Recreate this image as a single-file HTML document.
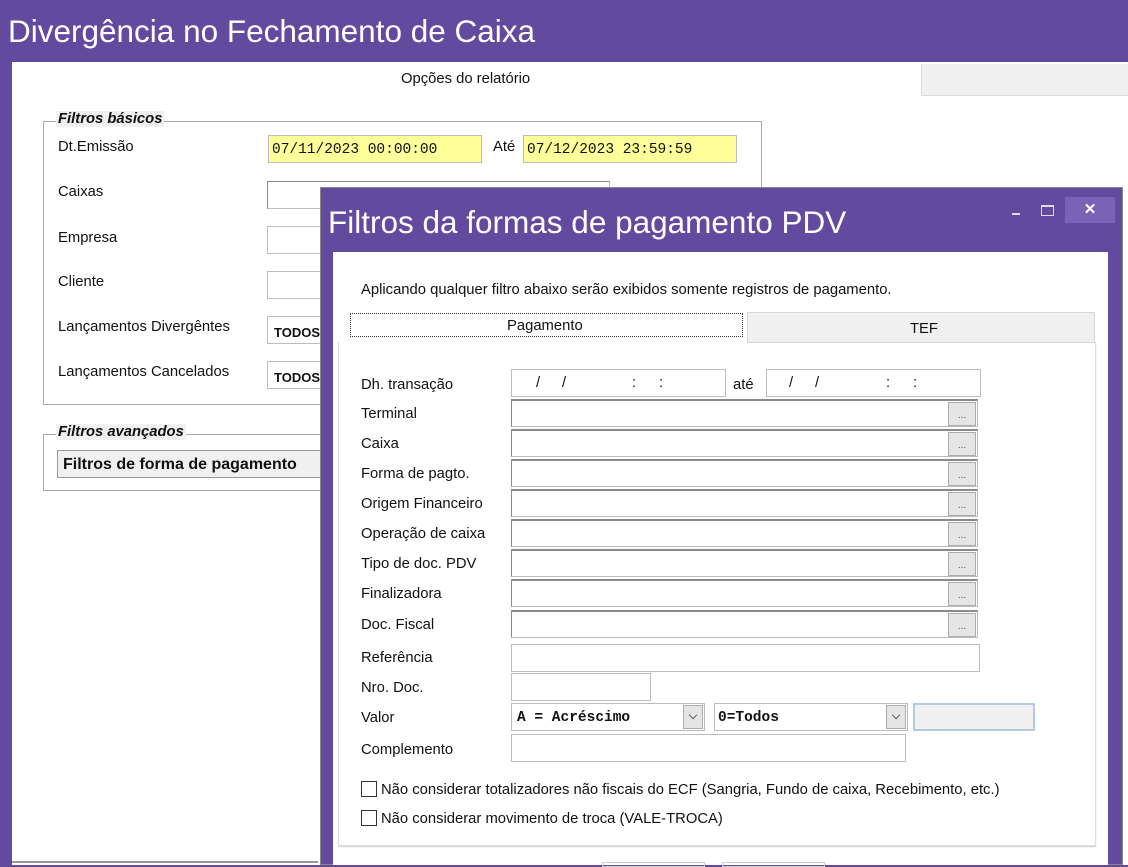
<!DOCTYPE html>
<html><head><meta charset="utf-8"><style>
*{box-sizing:border-box;margin:0;padding:0}
body{width:1128px;height:865px;overflow:hidden;background:#624a9e;font-family:"Liberation Sans",sans-serif;font-size:14.8px;color:#111;position:relative}
.a{position:absolute}
.lbl{position:absolute;font-size:14.8px;white-space:nowrap;margin-top:2px}
.inp{position:absolute;background:#fff;border:1px solid #bdbdbd;height:28px}
.lk{position:absolute;background:#fff;border:1px solid #bbb;border-top:2px solid #8a8a8a;border-left:1px solid #8a8a8a;height:28px}
.btn{position:absolute;right:1px;top:1px;width:28px;height:24px;background:#e5e5e5;border:1px solid #adadad;font-size:10px;color:#555;text-align:center;line-height:26px}
.mono{font-family:"Liberation Mono",monospace;font-size:14.5px}
.cb{position:absolute;width:16px;height:16px;border:1px solid #333;background:#fff}
.s{position:absolute;top:5px}
</style></head><body>
<div class="a" style="left:8px;top:13px;color:#fff;font-size:31.5px;font-weight:300">Divergência no Fechamento de Caixa</div>
<div class="a" style="left:12px;top:62px;width:1116px;height:803px;background:#fff"></div>
<div class="a" style="left:921px;top:64px;width:207px;height:32px;background:#f0f0f0;border-left:1px solid #ddd;border-bottom:1px solid #ddd"></div>
<div class="lbl" style="left:401px;top:69px">Opções do relatório</div>
<div class="a" style="left:12px;top:861px;width:306px;height:2px;background:#999"></div>

<div class="a" style="left:43px;top:121px;width:719px;height:284px;border:1px solid #aaa"></div>
<div class="lbl" style="left:56px;top:109px;background:#f0f0f0;font-weight:bold;font-style:italic;padding:0 2px">Filtros básicos</div>
<div class="lbl" style="left:58px;top:137px">Dt.Emissão</div>
<div class="inp mono" style="left:268px;top:135px;width:214px;background:#ffff99;padding:6px 3px">07/11/2023 00:00:00</div>
<div class="lbl" style="left:493px;top:137px">Até</div>
<div class="inp mono" style="left:523px;top:135px;width:214px;background:#ffff99;padding:6px 3px">07/12/2023 23:59:59</div>
<div class="lbl" style="left:58px;top:182px">Caixas</div>
<div class="inp" style="left:267px;top:181px;width:343px;border-top:1px solid #888;border-left:1px solid #888"></div>
<div class="lbl" style="left:58px;top:228px">Empresa</div>
<div class="inp" style="left:267px;top:226px;width:80px"></div>
<div class="lbl" style="left:58px;top:272px">Cliente</div>
<div class="inp" style="left:267px;top:271px;width:80px"></div>
<div class="lbl" style="left:58px;top:317px">Lançamentos Divergêntes</div>
<div class="inp" style="left:267px;top:316px;width:80px;font-weight:bold;font-size:13px;padding:8px 6px">TODOS</div>
<div class="lbl" style="left:58px;top:362px">Lançamentos Cancelados</div>
<div class="inp" style="left:267px;top:361px;width:80px;font-weight:bold;font-size:13px;padding:8px 6px">TODOS</div>

<div class="a" style="left:43px;top:434px;width:719px;height:57px;border:1px solid #aaa"></div>
<div class="lbl" style="left:56px;top:422px;background:#f0f0f0;font-weight:bold;font-style:italic;padding:0 2px">Filtros avançados</div>
<div class="a" style="left:57px;top:450px;width:300px;height:28px;background:#f0f0f0;border:1px solid #999;font-weight:bold;font-size:16px;padding:5px 5px">Filtros de forma de pagamento</div>

<!-- dialog -->
<div class="a" style="left:320px;top:187px;width:803px;height:678px;background:#624a9e;border:1px solid #888"></div>
<div class="a" style="left:328px;top:204px;color:#fff;font-size:31.5px;font-weight:300">Filtros da formas de pagamento PDV</div>
<div class="a" style="left:1012px;top:213px;width:8px;height:2px;background:#ddd"></div>
<div class="a" style="left:1041px;top:205px;width:13px;height:11px;border:2px solid #ddd;border-width:2px 1px 1px 1px"></div>
<div class="a" style="left:1065px;top:197px;width:50px;height:26px;background:#7a62b8;color:#fff;font-weight:bold;font-size:15px;text-align:center;line-height:25px">✕</div>
<div class="a" style="left:333px;top:252px;width:775px;height:613px;background:#fff"></div>
<div class="lbl" style="left:361px;top:280px">Aplicando qualquer filtro abaixo serão exibidos somente registros de pagamento.</div>
<div class="a" style="left:338px;top:342px;width:758px;height:504px;border:1px solid #ddd;border-top:none;box-shadow:0 1px 1px #ccc"></div>
<div class="a" style="left:747px;top:312px;width:348px;height:31px;background:#f0f0f0;border:1px solid #d8d8d8"></div>
<div class="lbl" style="left:910px;top:319px">TEF</div>
<div class="a" style="left:350px;top:313px;width:393px;height:24px;border:1px dotted #333"></div>
<div class="lbl" style="left:507px;top:316px">Pagamento</div>

<div class="lbl" style="left:361px;top:375px">Dh. transação</div>
<div class="inp" style="left:511px;top:369px;width:215px"><span class="s" style="left:24px">/</span><span class="s" style="left:50px">/</span><span class="s" style="left:120px">:</span><span class="s" style="left:147px">:</span></div>
<div class="lbl" style="left:733px;top:375px">até</div>
<div class="inp" style="left:766px;top:369px;width:215px"><span class="s" style="left:22px">/</span><span class="s" style="left:48px">/</span><span class="s" style="left:119px">:</span><span class="s" style="left:146px">:</span></div>

<div class="lbl" style="left:361px;top:404px">Terminal</div>
<div class="lk" style="left:511px;top:399px;width:467px"><div class="btn">...</div></div>
<div class="lbl" style="left:361px;top:434px">Caixa</div>
<div class="lk" style="left:511px;top:429px;width:467px"><div class="btn">...</div></div>
<div class="lbl" style="left:361px;top:464px">Forma de pagto.</div>
<div class="lk" style="left:511px;top:459px;width:467px"><div class="btn">...</div></div>
<div class="lbl" style="left:361px;top:494px">Origem Financeiro</div>
<div class="lk" style="left:511px;top:489px;width:467px"><div class="btn">...</div></div>
<div class="lbl" style="left:361px;top:524px">Operação de caixa</div>
<div class="lk" style="left:511px;top:519px;width:467px"><div class="btn">...</div></div>
<div class="lbl" style="left:361px;top:554px">Tipo de doc. PDV</div>
<div class="lk" style="left:511px;top:549px;width:467px"><div class="btn">...</div></div>
<div class="lbl" style="left:361px;top:584px">Finalizadora</div>
<div class="lk" style="left:511px;top:579px;width:467px"><div class="btn">...</div></div>
<div class="lbl" style="left:361px;top:615px">Doc. Fiscal</div>
<div class="lk" style="left:511px;top:610px;width:467px"><div class="btn">...</div></div>

<div class="lbl" style="left:361px;top:648px">Referência</div>
<div class="inp" style="left:511px;top:644px;width:469px"></div>
<div class="lbl" style="left:361px;top:678px">Nro. Doc.</div>
<div class="inp" style="left:511px;top:673px;width:140px"></div>
<div class="lbl" style="left:361px;top:708px">Valor</div>
<div class="inp mono" style="left:511px;top:703px;width:194px;font-weight:bold;padding:6px 5px">A = Acréscimo<div class="btn" style="width:20px;font-size:11px;line-height:22px">⌵</div></div>
<div class="inp mono" style="left:714px;top:703px;width:194px;font-weight:bold;padding:6px 3px">0=Todos<div class="btn" style="width:20px;font-size:11px;line-height:22px">⌵</div></div>
<div class="inp" style="left:913px;top:703px;width:122px;background:#f0f0f0;border:2px solid #b5c9e0"></div>
<div class="lbl" style="left:361px;top:740px">Complemento</div>
<div class="inp" style="left:511px;top:734px;width:395px"></div>

<div class="cb" style="left:361px;top:781px"></div>
<div class="lbl" style="left:381px;top:780px">Não considerar totalizadores não fiscais do ECF (Sangria, Fundo de caixa, Recebimento, etc.)</div>
<div class="cb" style="left:361px;top:810px"></div>
<div class="lbl" style="left:381px;top:809px">Não considerar movimento de troca (VALE-TROCA)</div>
<div class="a" style="left:602px;top:862px;width:103px;height:5px;border:1px solid #ccc"></div>
<div class="a" style="left:722px;top:862px;width:103px;height:5px;border:1px solid #ccc"></div>
</body></html>
